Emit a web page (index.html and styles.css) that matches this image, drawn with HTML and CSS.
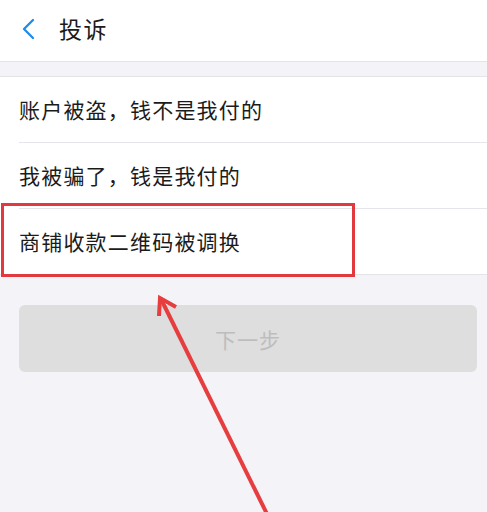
FILE: index.html
```html
<!DOCTYPE html>
<html lang="zh-CN">
<head>
<meta charset="utf-8">
<title>投诉</title>
<link rel="stylesheet" href="styles.css">
</head>
<body>
<div class="page">
  <header class="nav">
    <svg class="back" width="14" height="22" viewBox="0 0 14 22"><path d="M12 2 L3 11 L12 20" fill="none" stroke="#1d8bec" stroke-width="2.3" stroke-linecap="round" stroke-linejoin="round"/></svg>
    <h1 class="title">投诉</h1>
  </header>
  <div class="band"></div>
  <ul class="list">
    <li class="row"><span>账户被盗，钱不是我付的</span></li>
    <li class="row"><span>我被骗了，钱是我付的</span></li>
    <li class="row"><span>商铺收款二维码被调换</span></li>
  </ul>
  <div class="actions">
    <button class="next" disabled>下一步</button>
  </div>
  <div class="highlight"></div>
  <svg class="arrow" width="487" height="512" viewBox="0 0 487 512">
    <g fill="none" stroke="#e63d3f" stroke-width="4" stroke-linecap="butt" stroke-linejoin="miter">
      <line x1="267" y1="514" x2="161" y2="299"/>
      <polyline points="159,316 160,298 176,307"/>
    </g>
  </svg>
</div>
</body>
</html>
```
FILE: styles.css
```css
* { box-sizing: border-box; margin: 0; padding: 0; }
html, body { width: 487px; height: 512px; overflow: hidden; }
body {
  background: #f4f4f8;
  font-family: "Noto Sans CJK SC", "Noto Sans", sans-serif;
  color: #1b1b1b;
}
.page { position: relative; width: 487px; height: 512px; }
.nav {
  height: 62px;
  background: #fff;
  border-bottom: 1px solid #e4e4e8;
  display: flex;
  align-items: center;
  padding-left: 21px;
}
.back { display: block; margin-top: -4px; }
.title {
  font-size: 23px;
  font-weight: 400;
  margin-left: 24px;
  margin-top: -5px;
  letter-spacing: 1.5px;
}
.band { height: 14px; }
.list {
  list-style: none;
  background: #fff;
  border-top: 1px solid #e4e4e8;
  border-bottom: 1px solid #e4e4e8;
  padding-left: 19px;
}
.row {
  height: 66px;
  display: flex;
  align-items: center;
  font-size: 21px;
  letter-spacing: 1.2px;
  border-bottom: 1px solid #e6e6ea;
}
.row:last-child { border-bottom: none; height: 65px; }
.row span { margin-top: -2px; }
.actions { padding: 30px 10px 0 19px; }
.next {
  width: 458px;
  height: 67px;
  border: none;
  border-radius: 6px;
  background: #dedede;
  color: #bdbdbd;
  font-family: "Noto Sans CJK SC", sans-serif;
  font-size: 21px;
  letter-spacing: 1px;
}
.highlight {
  position: absolute;
  left: 1px;
  top: 203px;
  width: 354px;
  height: 74px;
  border: 3.5px solid #e2393f;
}
.arrow { position: absolute; left: 0; top: 0; }
```
